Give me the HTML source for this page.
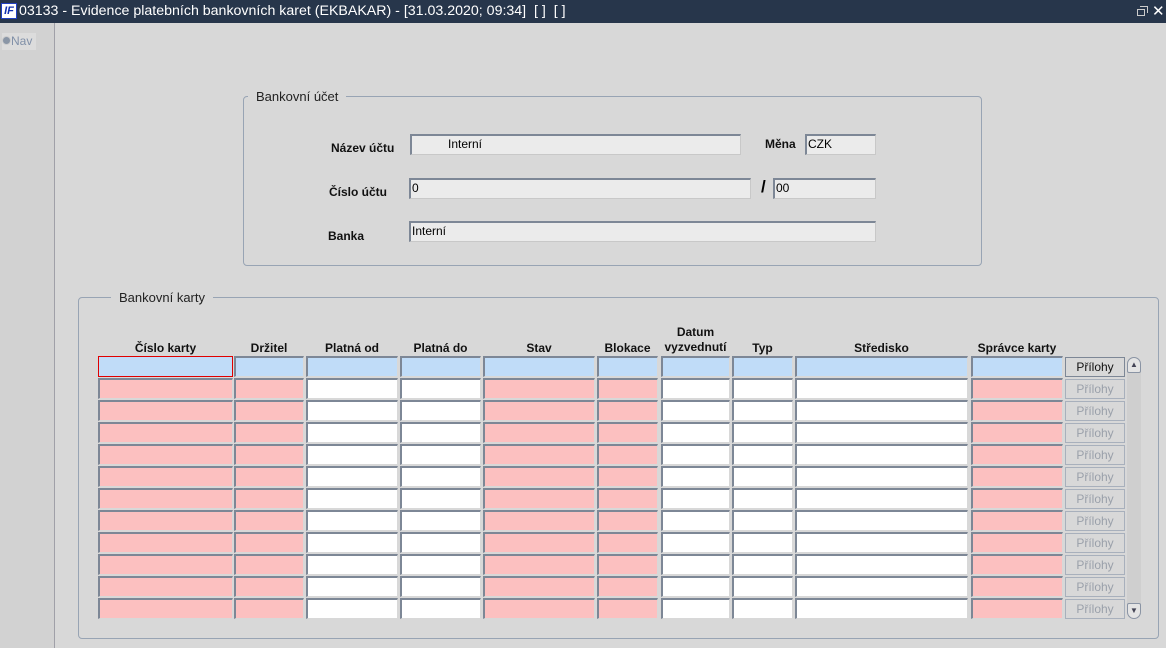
<!DOCTYPE html><html><head><meta charset="utf-8"><style>
*{box-sizing:border-box;margin:0;padding:0}
body{width:1166px;height:648px;background:#d8d8d8;font-family:"Liberation Sans",sans-serif;font-size:12px;position:relative;overflow:hidden}
.a{position:absolute}
.tb{left:0;top:0;width:1166px;height:23px;background:#27364b;color:#fff;font-size:14.2px;line-height:23px}
.fs{border:1px solid #98a4b4;border-radius:4px}
.lg{background:#d8d8d8;padding:0 8px;font-size:13px;color:#222}
.lb{font-weight:bold;font-size:12px;color:#111}
.in{background:#ebebeb;border:1px solid #c8c8c8;border-top:2px solid #7d8796;border-left:2px solid #7d8796;font-size:12px;line-height:17px;padding-left:1px}
.c{position:absolute;height:21px;border:1px solid #d8d8d8;border-top:2px solid #7d8796;border-left:2px solid #7d8796}
.h{position:absolute;font-weight:bold;font-size:12px;text-align:center;color:#111}
.bt{position:absolute;left:1065px;width:60px;height:20px;border:1px solid #a8b0bc;background:#d8d8d8;color:#9aa0aa;text-align:center;line-height:18px;font-size:12px}
</style></head><body>
<div class="a tb"><span style="position:absolute;left:1px;top:3px;width:16px;height:16px;background:#fff;border:1px solid #2040c0;color:#1030b0;font-size:11px;font-weight:bold;font-style:italic;line-height:14px;text-align:center">IF</span><span style="position:absolute;left:19px">03133 - Evidence platebních bankovních karet (EKBAKAR) - [31.03.2020; 09:34]&nbsp; [ ]&nbsp; [ ]</span>
<span style="position:absolute;left:1137px;top:9px;width:8px;height:7px;border:1px solid #ccc"></span><span style="position:absolute;left:1140px;top:6px;width:8px;height:7px;border-top:1px solid #ccc;border-right:1px solid #ccc"></span><span style="position:absolute;left:1152px;top:0;font-size:15px">✕</span></div>
<div class="a" style="left:0;top:23px;width:55px;height:625px;background:#d2d2d2;border-right:1px solid #a0a0a8"></div>
<div class="a" style="left:2px;top:33px;width:34px;height:17px;background:#dcdcdc;color:#8090a8;font-size:12px;line-height:17px"><span style="display:inline-block;width:9px;height:9px;border-radius:50%;background:#8a96a6;border:1px solid #ccc"></span>Nav</div>

<div class="a fs" style="left:243px;top:96px;width:739px;height:170px"></div>
<div class="a lg" style="left:248px;top:89px">Bankovní účet</div>
<div class="a lb" style="left:331px;top:141px">Název účtu</div>
<div class="a in" style="left:410px;top:134px;width:331px;height:21px;padding-left:36px">Interní</div>
<div class="a lb" style="left:765px;top:137px">Měna</div>
<div class="a in" style="left:805px;top:134px;width:71px;height:21px">CZK</div>
<div class="a lb" style="left:329px;top:185px">Číslo účtu</div>
<div class="a in" style="left:409px;top:178px;width:342px;height:21px">0</div>
<div class="a" style="left:761px;top:177px;font-size:17px;font-weight:bold">/</div>
<div class="a in" style="left:773px;top:178px;width:103px;height:21px">00</div>
<div class="a lb" style="left:328px;top:229px">Banka</div>
<div class="a in" style="left:409px;top:221px;width:467px;height:21px">Interní</div>

<div class="a fs" style="left:78px;top:297px;width:1081px;height:342px"></div>
<div class="a lg" style="left:111px;top:290px">Bankovní karty</div>
<div class="h" style="left:98px;top:341px;width:135px">Číslo karty</div>
<div class="h" style="left:234px;top:341px;width:70px">Držitel</div>
<div class="h" style="left:306px;top:341px;width:92px">Platná od</div>
<div class="h" style="left:400px;top:341px;width:81px">Platná do</div>
<div class="h" style="left:483px;top:341px;width:112px">Stav</div>
<div class="h" style="left:597px;top:341px;width:61px">Blokace</div>
<div class="h" style="left:656px;top:325px;width:79px;line-height:15px">Datum<br>vyzvednutí</div>
<div class="h" style="left:732px;top:341px;width:61px">Typ</div>
<div class="h" style="left:795px;top:341px;width:173px">Středisko</div>
<div class="h" style="left:971px;top:341px;width:92px">Správce karty</div>
<div id="g"></div>
<div class="a" style="left:1127px;top:357px;width:14px;height:262px;background:#cfcfcf;border-radius:7px"></div>
<div class="a" style="left:1127px;top:357px;width:14px;height:16px;border:1px solid #8a94a4;border-radius:7px 7px 2px 2px;background:#e4e4e4;font-size:8px;text-align:center;line-height:14px;color:#445">▲</div>
<div class="a" style="left:1127px;top:603px;width:14px;height:16px;border:1px solid #8a94a4;border-radius:2px 2px 7px 7px;background:#e4e4e4;font-size:8px;text-align:center;line-height:14px;color:#445">▼</div>
<script>
var cols=[[98,135,1],[234,70,1],[306,92,0],[400,81,0],[483,112,1],[597,61,1],[661,69,0],[732,61,0],[795,173,0],[971,92,1]];
var h='';
for(var r=0;r<12;r++){var y=356+r*22;
for(var i=0;i<cols.length;i++){var c=cols[i];var bg=r==0?'#c0dcf8':(c[2]?'#fcc0c0':'#fff');
var st=(r==0&&i==0)?'border:1px solid #e00000;':'';
h+='<div class="c" style="left:'+c[0]+'px;top:'+y+'px;width:'+c[1]+'px;background:'+bg+';'+st+'"></div>';}
h+='<div class="bt" style="top:'+(y+1)+'px;'+(r==0?'color:#111;border-color:#7d8796;':'')+'">Přílohy</div>';}
document.getElementById('g').innerHTML=h;
</script>
</body></html>
